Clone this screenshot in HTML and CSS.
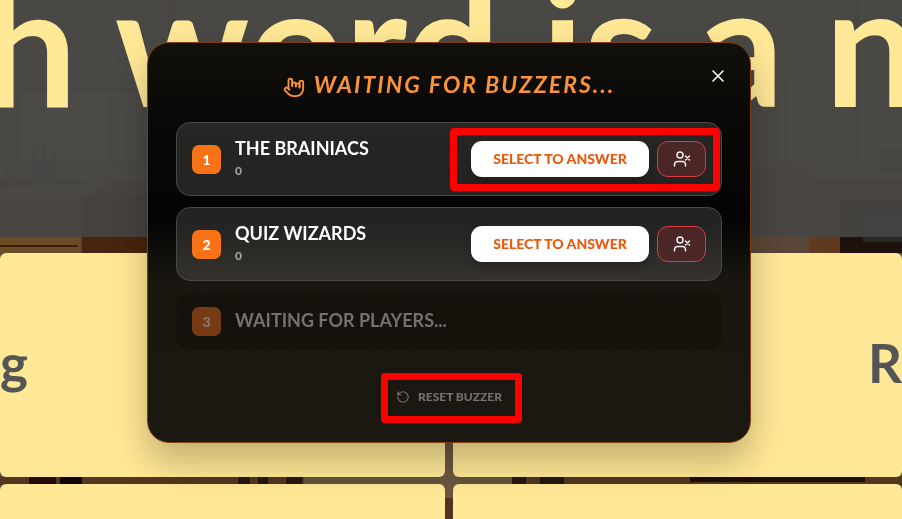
FILE: index.html
```
<!DOCTYPE html>
<html lang="en">
<head>
    <meta charset="UTF-8">
    <title>Quiz - Buzzers</title>
    <link rel="stylesheet" href="styles.css">
</head>
<body>
<!-- classroom behind the board -->
<svg class="scene" viewBox="0 0 902 519" preserveAspectRatio="xMidYMid slice" aria-hidden="true">
    <rect width="902" height="519" fill="#5c4630"/>
    <rect width="902" height="180" fill="#6a655c"/>
    <rect x="18" y="90" width="150" height="74" fill="#77736a" stroke="#584a3e" stroke-width="3"/>
    <rect x="168" y="0" width="7" height="90" fill="#57463c"/>
    <path d="M28 163h30l-6 20h-18z" fill="#3d4248"/>
    <path d="M36 163l-3-12M42 163l2-16M50 163l6-11M10 183l-6-24" stroke="#4d4437" stroke-width="3"/>
    <path d="M0 188l90-5h22l-28 12H0z" fill="#75664f"/>
    <rect y="195" width="80" height="58" fill="#6b4c27"/>
    <rect y="245" width="78" height="2" fill="#3a220b"/>
    <rect x="82" y="195" width="66" height="58" fill="#48240c"/>
    <rect x="750" y="0" width="85" height="165" fill="#67625a"/>
    <rect x="853" y="0" width="7" height="165" fill="#574d42"/>
    <rect x="879" y="150" width="23" height="24" fill="#474034"/>
    <rect x="751" y="165" width="60" height="88" fill="#5a4636"/>
    <rect x="809" y="186" width="93" height="67" fill="#5f3a1e"/>
    <rect x="840" y="200" width="62" height="53" fill="#1e100a"/>
    <rect x="863" y="212" width="39" height="30" fill="#2a2826"/>
    <rect y="477" width="902" height="8" fill="#53371f"/>
    <rect x="29" y="477" width="27" height="8" fill="#260c06"/>
    <rect x="60" y="477" width="22" height="8" fill="#0e0602"/>
    <path d="M238 477h12v8h-12zM258 477h10v8h-10zM286 477h16v8h-16zM512 477h14v8h-14zM540 477h24v8h-24z" fill="#25180d"/>
    <rect x="304" y="477" width="208" height="8" fill="#655239"/>
    <rect x="690" y="477" width="175" height="5" fill="#1f1007"/>
    <rect x="440" y="440" width="18" height="58" fill="#695740"/>
    <rect x="440" y="498" width="18" height="21" fill="#50341f"/>
</svg>

<main class="board">
    <h1 class="question">h word is a n</h1>
    <div class="answers">
        <div class="answer">g</div>
        <div class="answer answer-right">R</div>
        <div class="answer answer-next"></div>
        <div class="answer answer-next"></div>
    </div>
</main>

<div class="overlay">
    <section class="modal" role="dialog" aria-labelledby="modal-title">
        <button class="close" type="button" aria-label="Close">
            <svg width="14" height="14" viewBox="0 0 14 14"><path d="M2 2l10 10M12 2L2 12"/></svg>
        </button>
        <h2 class="title" id="modal-title">
            <svg width="22" height="22" viewBox="0 0 24 24">
                <path d="M18 12.5V10a2 2 0 0 0-2-2a2 2 0 0 0-2 2v1.4"/>
                <path d="M14 11V9a2 2 0 1 0-4 0v2"/>
                <path d="M10 10.5V5a2 2 0 1 0-4 0v9"/>
                <path d="m7 15-1.76-1.76a2 2 0 0 0-2.83 2.82l3.6 3.6C7.5 21.14 9.2 22 12 22h2a8 8 0 0 0 8-8V7a2 2 0 1 0-4 0v5"/>
            </svg>
            <span>WAITING FOR BUZZERS...</span>
        </h2>

        <ol class="teams">
            <li class="team">
                <span class="rank">1</span>
                <div class="info">
                    <span class="name">THE BRAINIACS</span>
                    <span class="score">0</span>
                </div>
                <div class="actions marked">
                    <button class="select" type="button">SELECT TO ANSWER</button>
                    <button class="remove" type="button" aria-label="Remove The Brainiacs">
                        <svg width="18" height="16" viewBox="0 0 18 16"><circle cx="7" cy="4" r="3"/><path d="M1.500 15v-1.500a3 3 0 0 1 3-3h5a3 3 0 0 1 3 3V15M12.500 5l4 4M16.500 5l-4 4"/></svg>
                    </button>
                </div>
            </li>
            <li class="team">
                <span class="rank">2</span>
                <div class="info">
                    <span class="name">QUIZ WIZARDS</span>
                    <span class="score">0</span>
                </div>
                <div class="actions">
                    <button class="select" type="button">SELECT TO ANSWER</button>
                    <button class="remove" type="button" aria-label="Remove Quiz Wizards">
                        <svg width="18" height="16" viewBox="0 0 18 16"><circle cx="7" cy="4" r="3"/><path d="M1.500 15v-1.500a3 3 0 0 1 3-3h5a3 3 0 0 1 3 3V15M12.500 5l4 4M16.500 5l-4 4"/></svg>
                    </button>
                </div>
            </li>
            <li class="team waiting">
                <span class="rank">3</span>
                <span class="name">WAITING FOR PLAYERS...</span>
            </li>
        </ol>

        <button class="reset marked" type="button">
            <svg width="14" height="14" viewBox="0 0 24 24"><path d="M3 12a9 9 0 1 0 9-9 9.750 9.750 0 0 0-6.740 2.740L3 8"/><path d="M3 3v5h5"/></svg>
            RESET BUZZER
        </button>
    </section>
</div>
</body>
</html>
```
FILE: styles.css
```
*{
    box-sizing: border-box;
    margin: 0;
    padding: 0;
}
body{
    height: 100vh;
    overflow: hidden;
    font-family: Lato, "Liberation Sans", sans-serif;
    font-weight: 700;
    background-color: #5c4630;
}
button{
    font: inherit;
    border: none;
    background: none;
    cursor: pointer;
}
svg{
    display: block;
    flex: none;
    fill: none;
    stroke: currentColor;
    stroke-width: 2;
    stroke-linecap: round;
    stroke-linejoin: round;
}

/* board */
.scene{
    position: fixed;
    inset: 0;
    width: 100%;
    height: 100%;
    stroke: none;
}
.board{
    position: relative;
    height: 100%;
    display: flex;
    flex-direction: column;
    gap: 16px;
}
.question{
    display: flex;
    justify-content: center;
    height: 237px;
    flex: none;
    overflow: hidden;
    line-height: 84px;
    font-size: 168px;
    white-space: nowrap;
    color: #ffe896;
    background-color: rgba(71, 69, 67, 0.92);
}
.answers{
    flex: 1;
    min-height: 0;
    display: grid;
    grid-template-columns: 445fr 449fr;
    grid-template-rows: 224px 1fr;
    gap: 7px 8px;
}
.answer{
    display: flex;
    align-items: center;
    padding-bottom: 6px;
    border-radius: 6px;
    font-size: 53px;
    color: #555;
    background-color: #ffe896;
    overflow: hidden;
}
.answer-right{
    justify-content: flex-end;
}
.answer-next{
    border-radius: 6px 6px 0 0;
}

/* modal */
.overlay{
    position: fixed;
    inset: 0;
    display: flex;
    justify-content: center;
    align-items: flex-start;
    padding: 42px 4px 0 0;
}
.modal{
    position: relative;
    width: 604px;
    max-width: 100%;
    padding: 28px;
    display: flex;
    flex-direction: column;
    align-items: center;
    border: 1px solid #7f3d10;
    border-radius: 22px;
    background: linear-gradient(#12100b, #080807 20%, #040404 44%, #1a1710 60%, #1b1811);
    box-shadow: 0 18px 36px rgba(0, 0, 0, 0.25);
}
.close{
    position: absolute;
    top: 22px;
    right: 21px;
    padding: 4px;
    color: #fff;
}
.close svg{
    stroke-width: 1.5;
}
.title{
    display: flex;
    align-items: flex-end;
    gap: 9px;
    height: 27px;
    margin-bottom: 24px;
    font-size: 23px;
    font-style: italic;
    line-height: 28px;
    letter-spacing: 2px;
    color: #fb923c;
}
.teams{
    width: 100%;
    display: flex;
    flex-direction: column;
    gap: 11px;
    list-style: none;
}
.team{
    display: flex;
    align-items: center;
    gap: 14px;
    min-height: 74px;
    padding: 0 15px;
    border: 1px solid #494948;
    border-radius: 14px;
    background-color: rgba(255, 255, 255, 0.12);
}
.waiting{
    min-height: 58px;
    border: 1px dashed #17150f;
    background-color: #15120c;
}
.rank{
    width: 29px;
    border-radius: 7px;
    line-height: 29px;
    text-align: center;
    font-size: 14px;
    font-weight: 900;
    color: #fff;
    background-color: #f97316;
}
.info{
    flex: 1;
    display: flex;
    flex-direction: column;
    gap: 4px;
    padding-bottom: 2px;
}
.name{
    font-size: 18px;
    line-height: 22px;
    color: #fff;
}
.score{
    font-size: 12px;
    font-weight: 900;
    line-height: 16px;
    color: #a0a0a0;
}
.waiting .rank{
    color: #8a7a6c;
    background-color: #773b13;
}
.waiting .name{
    padding-bottom: 2px;
    color: #73726e;
}
.actions{
    position: relative;
    display: flex;
    gap: 8px;
}
.select{
    width: 178px;
    height: 36px;
    padding-bottom: 2px;
    border-radius: 11px;
    font-size: 14px;
    font-weight: 900;
    color: #ea580c;
    background-color: #fff;
    box-shadow: 0 4px 8px rgba(0, 0, 0, 0.2);
}
.remove{
    width: 49px;
    height: 36px;
    display: flex;
    justify-content: center;
    align-items: center;
    border: 1px solid #dc3c3c;
    border-radius: 11px;
    color: #eee;
    background-color: #4a2626;
}
.remove svg{
    stroke-width: 1.5;
}
.reset{
    position: relative;
    display: flex;
    align-items: center;
    gap: 8px;
    margin: 38px 0 8px;
    height: 18px;
    font-size: 12px;
    font-weight: 900;
    line-height: 18px;
    color: #73726d;
}

/* red highlight frame */
.marked::after{
    content: "";
    position: absolute;
    inset: -13px -14px -14px -21px;
    border: 7px solid #f00;
    border-radius: 4px;
    pointer-events: none;
}
.reset.marked::after{
    inset: -15px -20px -17px -15px;
}
```
